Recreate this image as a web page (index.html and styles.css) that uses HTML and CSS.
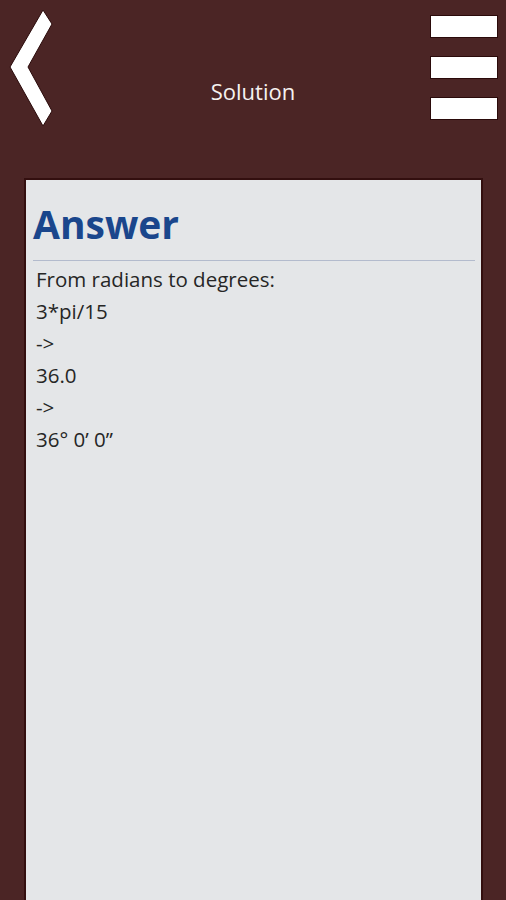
FILE: index.html
```html
<!DOCTYPE html>
<html lang="en">
<head>
  <meta charset="UTF-8">
  <meta name="viewport" content="width=device-width, initial-scale=1.0">
  <title>Solution</title>
  <link rel="stylesheet" href="styles.css">
</head>
<body>
  <header class="topbar">
    <a class="back" href="#" aria-label="Back">
      <svg width="60" height="135" viewBox="0 0 60 135">
        <polygon points="43,10 52,24 28,67 52,111 43,126 10,67" fill="#ffffff" stroke="#2a0a0a" stroke-width="1"/>
      </svg>
    </a>
    <div class="title">Solution</div>
    <div class="menu" aria-label="Menu">
      <span class="bar"></span>
      <span class="bar"></span>
      <span class="bar"></span>
    </div>
  </header>

  <main class="panel">
    <h1>Answer</h1>
    <hr>
    <div class="lines">
      <p>From radians to degrees:</p>
      <p>3*pi/15</p>
      <p>-&gt;</p>
      <p>36.0</p>
      <p>-&gt;</p>
      <p>36° 0’ 0”</p>
    </div>
  </main>
</body>
</html>
```

FILE: styles.css
```css
* {
  box-sizing: border-box;
}

body {
  margin: 0;
  background-color: #4b2525;
  font-family: "Open Sans", "DejaVu Sans", sans-serif;
  overflow: hidden;
}

.topbar {
  display: grid;
  grid-template-columns: 1fr auto 1fr;
  height: 178px;
}

.back {
  justify-self: start;
  display: block;
  width: 60px;
  height: 135px;
}

.back svg {
  display: block;
}

.title {
  padding-top: 76px;
  font-size: 22px;
  line-height: 30px;
  color: #f6f2f0;
}

.menu {
  justify-self: end;
  display: flex;
  flex-direction: column;
  gap: 18px;
  padding-top: 15px;
  margin-right: 8px;
}

.bar {
  display: block;
  width: 68px;
  height: 23px;
  background-color: #ffffff;
  border: 1px solid #2a0a0a;
}

.panel {
  margin: 0 23px 0 24px;
  min-height: 722px;
  padding: 0 6px 0 7px;
  background-color: #e4e6e8;
  border: 2px solid #330f0f;
  border-bottom: none;
}

h1 {
  margin: 20px 0 0;
  font-size: 39px;
  line-height: 48px;
  font-weight: 700;
  color: #1a468c;
}

hr {
  margin: 12px 0 2px;
  border: none;
  height: 1px;
  background-color: #b3bbcd;
}

.lines {
  padding-left: 3px;
}

.lines p {
  margin: 0;
  font-size: 20.5px;
  line-height: 32px;
  color: #262626;
}
```
